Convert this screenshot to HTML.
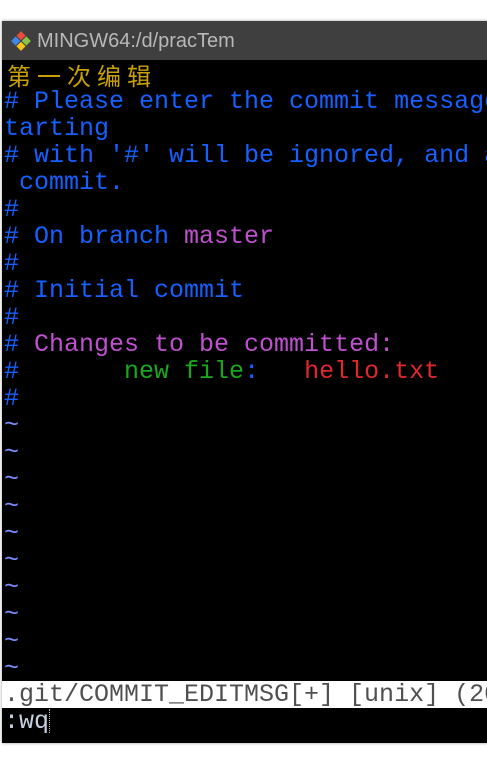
<!DOCTYPE html>
<html><head><meta charset="utf-8"><style>
body{margin:0;width:487px;height:758px;background:#fff;overflow:hidden;position:relative}
.win{position:absolute;left:2px;top:21px;width:500px;height:722px;background:#000;box-shadow:0 0 3px rgba(0,0,0,.4)}
.title{position:absolute;left:0;top:0;width:100%;height:39px;background:#3f3f3f;color:#b8b8b8;font:20px "Liberation Sans",sans-serif;line-height:40px}
.title span{position:absolute;left:35px;top:0}
.term{position:absolute;left:2px;top:40px;width:500px;font-family:"Liberation Mono",monospace;font-size:25px;letter-spacing:0;line-height:27px}
.r{height:27px;white-space:pre}
.b{color:#1560ff}.m{color:#c050d0}.g{color:#1aa81a}.red{color:#e0282e}.t{color:#7b8cff}.y{color:#c8a000}
.cj{display:inline-block;width:30px;font-family:"Noto Sans CJK SC",sans-serif;font-size:24px;letter-spacing:0;text-align:center}
.st{position:absolute;left:-2px;top:620px;width:100%;height:27px;background:#fff;color:#505050;padding-left:2px;white-space:pre}
.cmd{position:absolute;left:-2px;top:647px;height:27px;color:#c8d0e0;padding-left:2px;white-space:pre}
.cur{display:inline-block;width:0;height:24px;border-left:1px dotted #bbb;vertical-align:middle}
</style></head><body>
<div class="win">
<div class="title"><svg style="position:absolute;left:9px;top:10px" width="20" height="20" viewBox="0 0 20 20"><g transform="rotate(45 10 10)"><rect x="3" y="3" width="6.5" height="6.5" fill="#e74c3c"/><rect x="10.5" y="3" width="6.5" height="6.5" fill="#8bc34a"/><rect x="3" y="10.5" width="6.5" height="6.5" fill="#3f88e6"/><rect x="10.5" y="10.5" width="6.5" height="6.5" fill="#f5c518"/></g></svg><span>MINGW64:/d/pracTem</span></div>
<div class="term">
<div class="r y"><span class="cj">第</span><span class="cj">一</span><span class="cj">次</span><span class="cj">编</span><span class="cj">辑</span></div>
<div class="r b"># Please enter the commit message</div>
<div class="r b">tarting</div>
<div class="r b"># with '#' will be ignored, and a</div>
<div class="r b"> commit.</div>
<div class="r b">#</div>
<div class="r b"># On branch <span class="m">master</span></div>
<div class="r b">#</div>
<div class="r b"># Initial commit</div>
<div class="r b">#</div>
<div class="r b"># <span class="m">Changes to be committed:</span></div>
<div class="r b">#       <span class="g">new file</span>:   <span class="red">hello.txt</span></div>
<div class="r b">#</div>
<div class="r t">~</div><div class="r t">~</div><div class="r t">~</div><div class="r t">~</div><div class="r t">~</div><div class="r t">~</div><div class="r t">~</div><div class="r t">~</div><div class="r t">~</div><div class="r t">~</div>
<div class="st">.git/COMMIT_EDITMSG[+] [unix] (20</div>
<div class="cmd">:wq<span class="cur"></span></div>
</div>
</div>
</body></html>
